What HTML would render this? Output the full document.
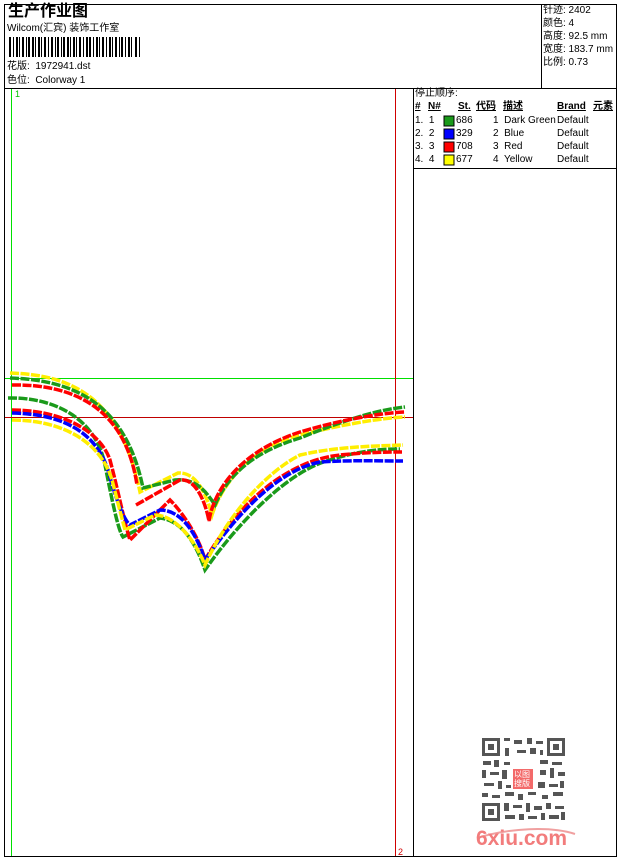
<!DOCTYPE html>
<html><head><meta charset="utf-8"><style>
body{margin:0;width:620px;height:860px;background:#fff;position:relative;overflow:hidden;font-family:"Liberation Sans","Noto Sans CJK SC",sans-serif;color:#000}
.t{position:absolute;font-size:10px;line-height:12px;white-space:nowrap}
</style></head><body>
<svg width="620" height="860" style="position:absolute;left:0;top:0" shape-rendering="crispEdges">
<rect x="4.5" y="4.5" width="612" height="852" fill="none" stroke="#000"/>
<line x1="4" y1="88.5" x2="617" y2="88.5" stroke="#000"/>
<line x1="541.5" y1="4" x2="541.5" y2="88" stroke="#000"/>
<line x1="413.5" y1="88" x2="413.5" y2="857" stroke="#000"/>
<line x1="413" y1="168.5" x2="617" y2="168.5" stroke="#000"/>
<line x1="11.5" y1="89" x2="11.5" y2="856" stroke="#00e000"/>
<line x1="5" y1="378.5" x2="413" y2="378.5" stroke="#00e000"/>
<line x1="5" y1="417.5" x2="413" y2="417.5" stroke="#c00000"/>
<line x1="395.5" y1="89" x2="395.5" y2="856" stroke="#d00000"/>
<g fill="#000">
<rect x="9" y="37" width="2" height="20"/><rect x="13" y="37" width="1" height="20"/><rect x="16" y="37" width="2" height="20"/><rect x="19" y="37" width="1" height="20"/><rect x="22" y="37" width="2" height="20"/><rect x="26" y="37" width="1" height="20"/><rect x="28" y="37" width="2" height="20"/><rect x="32" y="37" width="2" height="20"/><rect x="35" y="37" width="1" height="20"/><rect x="38" y="37" width="2" height="20"/><rect x="41" y="37" width="1" height="20"/><rect x="44" y="37" width="2" height="20"/><rect x="48" y="37" width="1" height="20"/><rect x="51" y="37" width="2" height="20"/><rect x="55" y="37" width="1" height="20"/><rect x="57" y="37" width="2" height="20"/><rect x="61" y="37" width="1" height="20"/><rect x="63" y="37" width="2" height="20"/><rect x="67" y="37" width="2" height="20"/><rect x="70" y="37" width="1" height="20"/><rect x="73" y="37" width="2" height="20"/><rect x="76" y="37" width="1" height="20"/><rect x="79" y="37" width="2" height="20"/><rect x="83" y="37" width="1" height="20"/><rect x="86" y="37" width="2" height="20"/><rect x="89" y="37" width="2" height="20"/><rect x="93" y="37" width="1" height="20"/><rect x="96" y="37" width="2" height="20"/><rect x="99" y="37" width="1" height="20"/><rect x="102" y="37" width="2" height="20"/><rect x="106" y="37" width="1" height="20"/><rect x="109" y="37" width="2" height="20"/><rect x="112" y="37" width="1" height="20"/><rect x="115" y="37" width="2" height="20"/><rect x="119" y="37" width="1" height="20"/><rect x="121" y="37" width="2" height="20"/><rect x="125" y="37" width="1" height="20"/><rect x="128" y="37" width="2" height="20"/><rect x="131" y="37" width="1" height="20"/><rect x="135" y="37" width="2" height="20"/><rect x="139" y="37" width="1" height="20"/>
</g>
<g fill="none" stroke-width="3.5" stroke-dasharray="9 1.5" shape-rendering="auto">
<path d="M10,373 C70,375 120,395 140,492 L178,473 C195,472 205,490 212,515 C225,475 260,445 300,435 C340,425 380,418 405,417" stroke="#ffee00"/>
<path d="M10,378 C70,380 125,400 143,488 L175,480 C195,478 205,490 215,505 C230,470 260,450 300,438 C340,422 375,410 405,407" stroke="#1a9a1a"/>
<path d="M12,385 C70,384 125,405 137,485 M136,505 L180,480 C195,478 205,500 209,521 C212,500 230,455 300,432 C340,420 380,413 405,412" stroke="#ff0000"/>
<path d="M8,398 C50,397 95,415 105,465 C112,500 118,530 123,537 L160,518 C180,520 195,540 205,570 C240,520 290,470 330,460 C360,450 385,449 400,449" stroke="#1a9a1a"/>
<path d="M12,410 C60,410 100,430 110,460 C118,490 125,525 130,540 L170,500 C185,515 200,540 205,560 C240,500 290,460 340,455 C370,452 390,452 402,452" stroke="#ff0000"/>
<path d="M12,413 C60,414 95,430 108,470 C116,500 124,520 130,525 L160,510 C180,510 195,530 205,560 C240,510 280,470 320,462 C350,460 380,461 403,461" stroke="#0000ff"/>
<path d="M12,420 C60,420 100,440 112,480 L125,530 L155,515 C175,515 195,540 205,565 C230,510 270,470 300,455 C340,446 380,446 403,445" stroke="#ffee00"/>
</g>
<rect x="444" y="116" width="10" height="10" fill="#1a9a1a" stroke="#000"/>
<rect x="444" y="129" width="10" height="10" fill="#0000ff" stroke="#000"/>
<rect x="444" y="142" width="10" height="10" fill="#ff0000" stroke="#000"/>
<rect x="444" y="155" width="10" height="10" fill="#ffff00" stroke="#000"/>
<g fill="#555">
<rect x="482" y="738" width="18" height="18"/><rect x="485" y="741" width="12" height="12" fill="#fff"/><rect x="488" y="744" width="6" height="6"/>
<rect x="547" y="738" width="18" height="18"/><rect x="550" y="741" width="12" height="12" fill="#fff"/><rect x="553" y="744" width="6" height="6"/>
<rect x="482" y="803" width="18" height="18"/><rect x="485" y="806" width="12" height="12" fill="#fff"/><rect x="488" y="809" width="6" height="6"/>
<rect x="504" y="738" width="6" height="3"/><rect x="514" y="740" width="8" height="4"/><rect x="527" y="738" width="5" height="6"/><rect x="536" y="741" width="7" height="3"/>
<rect x="505" y="748" width="4" height="8"/><rect x="517" y="750" width="9" height="3"/><rect x="530" y="748" width="6" height="6"/><rect x="540" y="750" width="3" height="5"/>
<rect x="483" y="761" width="8" height="4"/><rect x="494" y="760" width="5" height="7"/><rect x="504" y="762" width="6" height="3"/><rect x="540" y="760" width="8" height="4"/><rect x="552" y="762" width="10" height="3"/>
<rect x="482" y="770" width="4" height="8"/><rect x="490" y="772" width="9" height="3"/><rect x="502" y="770" width="5" height="9"/><rect x="540" y="770" width="6" height="5"/><rect x="550" y="768" width="4" height="10"/><rect x="558" y="772" width="7" height="4"/>
<rect x="484" y="783" width="10" height="3"/><rect x="498" y="781" width="4" height="8"/><rect x="506" y="785" width="5" height="3"/><rect x="538" y="782" width="7" height="6"/><rect x="549" y="784" width="9" height="3"/><rect x="560" y="781" width="4" height="7"/>
<rect x="482" y="793" width="6" height="4"/><rect x="492" y="795" width="8" height="3"/><rect x="505" y="792" width="9" height="4"/><rect x="518" y="794" width="5" height="6"/><rect x="528" y="792" width="8" height="3"/><rect x="542" y="795" width="6" height="4"/><rect x="553" y="792" width="10" height="4"/>
<rect x="504" y="803" width="5" height="8"/><rect x="513" y="805" width="9" height="3"/><rect x="526" y="803" width="4" height="9"/><rect x="534" y="806" width="8" height="4"/><rect x="546" y="803" width="5" height="6"/><rect x="555" y="806" width="9" height="3"/>
<rect x="505" y="815" width="10" height="4"/><rect x="519" y="814" width="5" height="6"/><rect x="528" y="816" width="9" height="3"/><rect x="541" y="813" width="4" height="7"/><rect x="549" y="815" width="10" height="4"/><rect x="561" y="812" width="4" height="8"/>
</g>
<rect x="512" y="768" width="22" height="22" fill="#fff"/>
<rect x="513" y="769" width="20" height="20" fill="#f36a6a"/>
<path d="M477,838 C510,828 550,826 575,834" stroke="#f0a0a0" stroke-width="2" fill="none" shape-rendering="auto"/>
</svg>
<div class="t" style="left:8px;top:3px;font-size:16px;line-height:18px;font-weight:bold">生产作业图</div>
<div class="t" style="left:7px;top:23px">Wilcom(汇宾) 装饰工作室</div>
<div class="t" style="left:7px;top:61px">花版:&nbsp; 1972941.dst</div>
<div class="t" style="left:7px;top:75px">色位:&nbsp; Colorway 1</div>
<div class="t" style="left:15px;top:88px;font-size:9px;color:#00c000">1</div>
<div class="t" style="left:398px;top:846px;font-size:9px;color:#d00000">2</div>
<div class="t" style="left:543px;top:5px">针迹: 2402</div>
<div class="t" style="left:543px;top:18px">颜色: 4</div>
<div class="t" style="left:543px;top:31px">高度: 92.5 mm</div>
<div class="t" style="left:543px;top:44px">宽度: 183.7 mm</div>
<div class="t" style="left:543px;top:57px">比例: 0.73</div>
<div class="t" style="left:415px;top:88px">停止顺序:</div>
<div class="t" style="left:415px;top:101px;font-weight:bold;text-decoration:underline">#</div>
<div class="t" style="left:428px;top:101px;font-weight:bold;text-decoration:underline">N#</div>
<div class="t" style="left:458px;top:101px;font-weight:bold;text-decoration:underline">St.</div>
<div class="t" style="left:476px;top:101px;font-weight:bold;text-decoration:underline">代码</div>
<div class="t" style="left:503px;top:101px;font-weight:bold;text-decoration:underline">描述</div>
<div class="t" style="left:557px;top:101px;font-weight:bold;text-decoration:underline">Brand</div>
<div class="t" style="left:593px;top:101px;font-weight:bold;text-decoration:underline">元素</div>
<div class="t" style="left:415px;top:115px">1.&nbsp; 1</div><div class="t" style="left:456px;top:115px">686</div><div class="t" style="left:493px;top:115px">1&nbsp; Dark Green</div><div class="t" style="left:557px;top:115px">Default</div>
<div class="t" style="left:415px;top:128px">2.&nbsp; 2</div><div class="t" style="left:456px;top:128px">329</div><div class="t" style="left:493px;top:128px">2&nbsp; Blue</div><div class="t" style="left:557px;top:128px">Default</div>
<div class="t" style="left:415px;top:141px">3.&nbsp; 3</div><div class="t" style="left:456px;top:141px">708</div><div class="t" style="left:493px;top:141px">3&nbsp; Red</div><div class="t" style="left:557px;top:141px">Default</div>
<div class="t" style="left:415px;top:154px">4.&nbsp; 4</div><div class="t" style="left:456px;top:154px">677</div><div class="t" style="left:493px;top:154px">4&nbsp; Yellow</div><div class="t" style="left:557px;top:154px">Default</div>
<div class="t" style="left:514px;top:770px;font-size:8px;line-height:9px;color:#fff;width:20px;white-space:normal">以图搜版</div>
<div class="t" style="left:476px;top:827px;font-size:21px;line-height:24px;font-weight:bold;color:#f27c7c">6xiu.com</div>
</body></html>
